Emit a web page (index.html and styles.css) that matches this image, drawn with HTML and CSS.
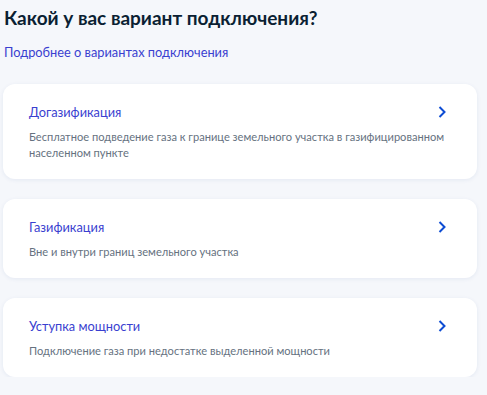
FILE: index.html
```html
<!DOCTYPE html>
<html lang="ru">
<head>
<meta charset="UTF-8">
<title>Варианты подключения</title>
<link rel="stylesheet" href="styles.css">
</head>
<body>
<div class="page">
    <h1 class="title">Какой у вас вариант подключения?</h1>
    <a class="more" href="#">Подробнее о вариантах подключения</a>

    <div class="options">
        <a class="option" href="#">
            <div class="option-head">
                <span class="option-name">Догазификация</span>
                <svg class="arrow" width="8" height="12" viewBox="0 0 8 12"><path d="M1.5 1 L6.5 6 L1.5 11" fill="none" stroke="#0d4cd3" stroke-width="2"/></svg>
            </div>
            <div class="option-desc">Бесплатное подведение газа к границе земельного участка в газифицированном населенном пункте</div>
        </a>
        <a class="option" href="#">
            <div class="option-head">
                <span class="option-name">Газификация</span>
                <svg class="arrow" width="8" height="12" viewBox="0 0 8 12"><path d="M1.5 1 L6.5 6 L1.5 11" fill="none" stroke="#0d4cd3" stroke-width="2"/></svg>
            </div>
            <div class="option-desc">Вне и внутри границ земельного участка</div>
        </a>
        <a class="option" href="#">
            <div class="option-head">
                <span class="option-name">Уступка мощности</span>
                <svg class="arrow" width="8" height="12" viewBox="0 0 8 12"><path d="M1.5 1 L6.5 6 L1.5 11" fill="none" stroke="#0d4cd3" stroke-width="2"/></svg>
            </div>
            <div class="option-desc">Подключение газа при недостатке выделенной мощности</div>
        </a>
    </div>
</div>
</body>
</html>
```

FILE: styles.css
```css
body{margin:0; background:#f5f7fb; font-family:Lato, "Noto Sans", sans-serif; color:#0b1f33;}
.page{padding:0 10px 0 3px;}
.title{margin:0; padding:5px 0 0 1px; font-size:19px; line-height:26px; font-weight:700; color:#0b1f33;}
.more{display:inline-block; margin:13px 0 0 1px; font-size:12.8px; line-height:16px; color:#3a3fd0; text-decoration:none;}
.options{display:flex; flex-direction:column; gap:20px; margin-top:24px;}
.option{display:block; padding:20px 26px 18px 26px; background:#fff; border-radius:12px; box-shadow:0 1px 4px rgba(25,60,140,0.08); text-decoration:none;}
.option-head{display:flex; justify-content:space-between; align-items:center;}
.option-name{font-size:12.8px; line-height:16px; color:#3a3fd0;}
.arrow{flex:none; margin-right:5px;}
.option-desc{margin-top:9px; font-size:11.1px; line-height:16px; color:#66727f;}
```
